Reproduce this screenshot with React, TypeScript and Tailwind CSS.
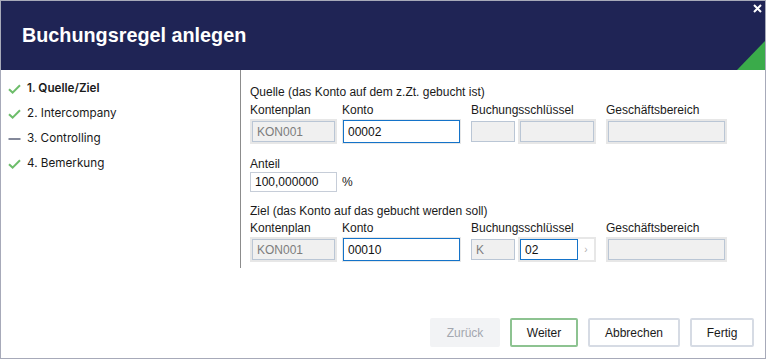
import React from "react";

function Check() {
  return (
    <svg width="13" height="10" viewBox="0 0 13 10" className="shrink-0">
      <path d="M1 5.2 L4.6 8.6 L12 1.2" fill="none" stroke="#6dbd6a" strokeWidth="2" />
    </svg>
  );
}

function Dash() {
  return (
    <svg width="13" height="10" viewBox="0 0 13 10" className="shrink-0">
      <path d="M0.5 5 L12.5 5" fill="none" stroke="#5a6078" strokeWidth="1.5" />
    </svg>
  );
}

function Step({ icon, label, active }: { icon: React.ReactNode; label: string; active?: boolean }) {
  return (
    <div className="flex h-[25px] items-center gap-[6px]">
      {icon}
      <span className={`text-[11.7px] text-[#1a1a1a] ${active ? "font-semibold" : "font-normal"}`}>{label}</span>
    </div>
  );
}

function Label({ children }: { children: React.ReactNode }) {
  return <div className="h-[14px] leading-[14px] text-[12px] text-[#1a1a1a] whitespace-nowrap">{children}</div>;
}

function DisabledField({ value, w }: { value?: string; w: string }) {
  return (
    <div className={`flex p-[2px] bg-[#e7e7e7] ${w}`}>
      <div className="flex h-[21px] flex-1 items-center border border-[#bac6d5] bg-[#f0f0f0] px-[4px] text-[12px] text-[#7d7d7d]">
        {value}
      </div>
    </div>
  );
}

function ActiveField({ value, w }: { value: string; w: string }) {
  return (
    <div className={`flex p-[1px] bg-[#e7e7e7] ${w}`}>
      <div className="flex h-[23px] flex-1 items-center border border-[#1473c9] bg-white px-[4px] text-[12px] text-[#111]">
        {value}
      </div>
    </div>
  );
}

function Row({ target }: { target?: boolean }) {
  return (
    <div className="flex">
      <div className="flex w-[87px] flex-col gap-[2px]">
        <Label>Kontenplan</Label>
        <DisabledField value="KON001" w="w-[87px]" />
      </div>
      <div className="ml-[5px] flex w-[119px] flex-col gap-[2px]">
        <Label>Konto</Label>
        <ActiveField value={target ? "00010" : "00002"} w="w-[119px]" />
      </div>
      <div className="ml-[10px] flex w-[125px] flex-col gap-[2px]">
        <Label>Buchungsschlüssel</Label>
        <div className="flex items-center">
          <div className="flex h-[21px] w-[44px] items-center border border-[#bac6d5] bg-[#f0f0f0] px-[4px] text-[12px] text-[#7d7d7d]">
            {target ? "K" : ""}
          </div>
          {target ? (
            <div className="ml-[3px] flex w-[78px] p-[2px] bg-[#e7e7e7]">
              <div className="flex h-[21px] w-[58px] items-center border border-[#1473c9] bg-white px-[4px] text-[12px] text-[#111]">
                02
              </div>
              <div className="flex h-[21px] flex-1 items-center justify-center bg-white text-[10px] text-[#b0b0b0]">›</div>
            </div>
          ) : (
            <DisabledField w="ml-[3px] w-[78px]" />
          )}
        </div>
      </div>
      <div className="ml-[10px] flex w-[121px] flex-col gap-[2px]">
        <Label>Geschäftsbereich</Label>
        <DisabledField w="w-[121px]" />
      </div>
    </div>
  );
}

function Btn({ children, kind, w }: { children: React.ReactNode; kind: "disabled" | "primary" | "normal"; w: string }) {
  const cls =
    kind === "disabled"
      ? "bg-[#f2f3f5] border-[#f2f3f5] text-[#a3a7af]"
      : kind === "primary"
      ? "bg-white border-[#8dc391] text-[#1a1a1a]"
      : "bg-white border-[#d6dbe4] text-[#1a1a1a]";
  return (
    <div className={`flex h-[29px] items-center justify-center rounded-[2px] border-2 text-[12px] ${cls} ${w}`}>
      {children}
    </div>
  );
}

export default function App() {
  return (
    <div className="w-[766px] h-[359px] border border-[#a7aab9] bg-white flex flex-col font-['Liberation_Sans',Arial,sans-serif] overflow-hidden">
      <div className="relative h-[69px] shrink-0 bg-[#1f2455] flex items-center pl-[21px]">
        <div className="text-[19.8px] font-bold text-white leading-[23px]">Buchungsregel anlegen</div>
        <div className="absolute right-[3px] top-[3px] text-white">
          <svg width="9" height="9" viewBox="0 0 9 9">
            <path d="M1 1 L8 8 M8 1 L1 8" stroke="white" strokeWidth="2" />
          </svg>
        </div>
        <svg className="absolute right-0 bottom-0" width="28" height="29" viewBox="0 0 28 29">
          <path d="M0 29 L28 0 L28 29 Z" fill="#3aab4a" />
        </svg>
      </div>
      <div className="flex flex-1 flex-col">
        <div className="flex">
          <div className="w-[239px] pl-[7px] pt-[6px] font-['Inter',sans-serif]">
            <Step icon={<Check />} label="1. Quelle/Ziel" active />
            <Step icon={<Check />} label="2. Intercompany" />
            <Step icon={<Dash />} label="3. Controlling" />
            <Step icon={<Check />} label="4. Bemerkung" />
          </div>
          <div className="border-l border-[#8c8c8c] pl-[9px] pt-[15px] pb-[6px] flex flex-col">
            <Label>Quelle (das Konto auf dem z.Zt. gebucht ist)</Label>
            <div className="mt-[4px]">
              <Row />
            </div>
            <div className="mt-[13px]">
              <Label>Anteil</Label>
            </div>
            <div className="mt-[1px] flex items-center">
              <div className="flex h-[20px] w-[87px] items-center border border-[#c6cdd8] bg-white px-[4px] text-[12px] text-[#111]">
                100,000000
              </div>
              <span className="ml-[5px] text-[12px] text-[#1a1a1a]">%</span>
            </div>
            <div className="mt-[12px]">
              <Label>Ziel (das Konto auf das gebucht werden soll)</Label>
            </div>
            <div className="mt-[3px]">
              <Row target />
            </div>
          </div>
        </div>
        <div className="mt-auto flex justify-end gap-[10px] pr-[11px] pb-[11px]">
          <Btn kind="disabled" w="w-[70px]">Zurück</Btn>
          <Btn kind="primary" w="w-[68px]">Weiter</Btn>
          <Btn kind="normal" w="w-[92px]">Abbrechen</Btn>
          <Btn kind="normal" w="w-[64px]">Fertig</Btn>
        </div>
      </div>
    </div>
  );
}
